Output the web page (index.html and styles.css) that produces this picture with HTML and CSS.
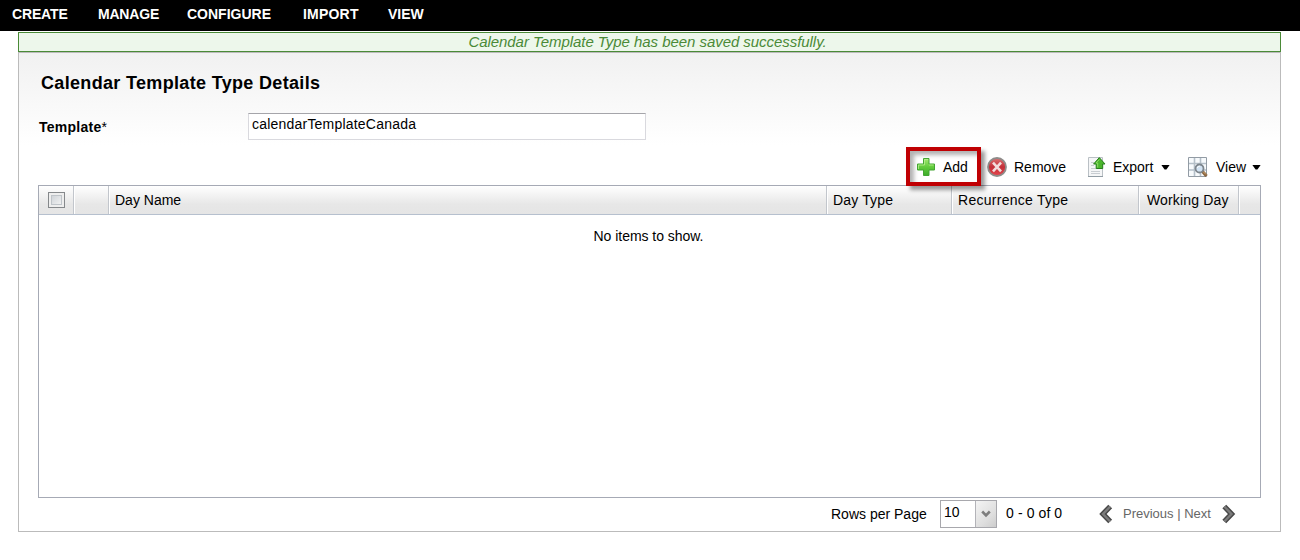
FILE: index.html
```html
<!DOCTYPE html>
<html lang="en">
<head>
<meta charset="utf-8">
<title>Calendar Template Type Details</title>
<link rel="stylesheet" href="styles.css">
</head>
<body>
<nav class="menu"><a class="create">CREATE</a><a class="manage">MANAGE</a><a class="configure">CONFIGURE</a><a class="import">IMPORT</a><a class="view">VIEW</a></nav>
<main class="page">
  <div class="message"><span>Calendar Template Type has been saved successfully.</span></div>
  <section class="panel">
    <h1 class="title">Calendar Template Type Details</h1>
    <div class="field">
      <label class="label">Template<span class="star">*</span></label>
      <div class="input">calendarTemplateCanada</div>
    </div>
    <div class="toolbar">
      <div class="tool add">
        <svg class="plus" width="20" height="20" viewBox="0 0 20 20"><defs><linearGradient id="green" x2="0" y2="1"><stop offset="0" stop-color="#a5e873"/><stop offset=".5" stop-color="#62cc3c"/><stop offset="1" stop-color="#3cab2a"/></linearGradient></defs><path d="M7.500 1.500h5.500v5.500h5.500v6h-5.500v5.500h-5.500v-5.500h-6v-6h6z" fill="url(#green)" stroke="#43a532"/><path d="M8.500 8v-5.500h3.500M2.500 12v-4h6M13 8h4.500" fill="none" stroke="#baf092" opacity=".75"/></svg>
        <span class="t-add">Add</span>
      </div>
      <div class="tool remove">
        <svg width="20" height="20" viewBox="0 0 20 20"><defs><linearGradient id="red" x2="0" y2="1"><stop offset="0" stop-color="#dc7474"/><stop offset=".5" stop-color="#c32f38"/><stop offset="1" stop-color="#e5484f"/></linearGradient></defs><circle cx="10" cy="10" r="9" fill="url(#red)" stroke="#8e8c8a" stroke-width="1.800"/><path d="M6 5.700l8 8.600M14 5.700l-8 8.600" stroke="#f3dddd" stroke-width="2.600"/></svg>
        <span class="t-remove">Remove</span>
      </div>
      <div class="tool export">
        <svg width="20" height="20" viewBox="0 0 20 20"><path d="M1.500 .5h14v19h-14z" fill="#f5f6f7" stroke="#bac0c5"/><path d="M1 19.500h15" stroke="#929da5"/><path d="M4 5.500h3M4 8.500h3M4 11.500h5M4 14.500h9M4 16.500h9" stroke="#c8cdd2"/><path d="M12.300 .6l5.700 6.400h-2.300v4.500H9.200V7H6.600z" fill="#4bb52d" stroke="#287e1e"/><path d="M12.300 2.500L9 6h1.700v4.500" fill="none" stroke="#8cdd65"/></svg>
        <span class="t-export">Export</span><i class="caret"></i>
      </div>
      <div class="tool viewtool">
        <svg width="21" height="20" viewBox="0 0 21 20"><path d="M1.500 .5h18v19h-18z" fill="#f7fafc" stroke="#929ba4"/><path d="M2 6.500h17M2 13h17M7.500 1v18M13.500 1v18" stroke="#b5c0c9" stroke-width="1.600"/><path d="M15.500 14.500l4 4.500" stroke="#8b6742" stroke-width="3.200"/><path d="M16 14.500l3 3" stroke="#d3a66f"/><circle cx="12.500" cy="11.500" r="4" fill="#d2e3f3" stroke="#7e868d" stroke-width="1.800"/><path d="M10.300 11c.4-1.300 1.300-2 2.500-1.800" fill="none" stroke="#fff"/></svg>
        <span class="t-view">View</span><i class="caret"></i>
      </div>
    </div>
    <div class="table">
      <div class="head">
        <div class="cell check"><span class="box"></span></div><div class="cell"></div><div class="cell"><span class="h-name">Day Name</span></div><div class="cell"><span class="h-type">Day Type</span></div><div class="cell"><span class="h-rec">Recurrence Type</span></div><div class="cell work"><span class="h-work">Working Day</span></div><div class="cell last"></div>
      </div>
      <div class="empty"><span>No items to show.</span></div>
    </div>
    <div class="pager">
      <span class="rows">Rows per Page</span>
      <div class="select"><span class="value">10</span><span class="drop"><svg width="10" height="8" viewBox="0 0 10 8"><path d="M1.200 1.500L5 5.300l3.800-3.800" fill="none" stroke="#7d7d7d" stroke-width="2.600"/></svg></span></div>
      <span class="count">0 - 0 of 0</span>
      <svg class="prev" width="14" height="20" viewBox="0 0 14 20"><path d="M11.200 2.500L4 10l7.200 7.500" fill="none" stroke="#484848" stroke-width="5.400"/><path d="M11.200 2.500L4 10l7.200 7.500" fill="none" stroke="#7c7c7c" stroke-width="2.400"/></svg>
      <span class="links">Previous | Next</span>
      <svg class="next" width="14" height="20" viewBox="0 0 14 20"><path d="M2.300 2.500L9.500 10l-7.200 7.500" fill="none" stroke="#484848" stroke-width="5.400"/><path d="M2.300 2.500L9.500 10l-7.200 7.500" fill="none" stroke="#7c7c7c" stroke-width="2.400"/></svg>
    </div>
  </section>
</main>
</body>
</html>
```
FILE: styles.css
```css
* { box-sizing: border-box; }
body { margin: 0; background: #fff; color: #000; font: 14px/16px "Liberation Sans", Arial, sans-serif; white-space: nowrap; }
svg { display: block; flex: none; }
.menu { display: grid; grid-template-columns: 86px 89px 116px 85px 100px; height: 31px; padding: 6px 0 0 12px; background: #000; color: #fff; font-weight: bold; }
.create { letter-spacing: -.15px; }
.manage { letter-spacing: -.2px; }
.import { letter-spacing: .2px; }
.page { width: 1263px; margin: 1px 0 0 18px; }
.message { height: 20px; border: 1px solid #4a8a37; padding-right: 4px; background: #edf7eb; color: #4a8a37; font-size: 15px; font-style: italic; line-height: 18px; letter-spacing: -.05px; text-align: center; }
.panel { height: 480px; border: 1px solid #bbb; padding: 19px 19px 0; background: linear-gradient(#f1f1f1, #fff 92px); }
.title { margin: 0 0 0 3px; font-size: 18px; line-height: 22px; letter-spacing: .33px; }
.field { display: flex; margin: 19px 0 0 1px; }
.label { width: 209px; padding-top: 6px; font-weight: bold; letter-spacing: .25px; }
.star { font-weight: normal; }
.input { width: 398px; height: 27px; border: 1px solid #d9d9de; border-top-color: #a5a5aa; padding: 2px 3px; background: #fff; letter-spacing: .21px; }
.toolbar { display: flex; height: 38px; margin-top: 7px; justify-content: flex-end; align-items: flex-start; }
.tool { display: flex; align-items: center; height: 20px; margin-top: 10px; }
.add { position: relative; z-index: 1; width: 75px; height: 39px; margin-top: 0; border: 4px solid #c00003; padding-left: 6px; gap: 7px; box-shadow: 4px 4px 4px rgba(0, 0, 0, .4), inset 4px 4px 4px rgba(0, 0, 0, .3); }
.remove { width: 95px; margin-left: 6px; gap: 7px; }
.export { width: 95px; margin-left: 5px; }
.t-export { width: 48px; margin-left: 6px; }
.viewtool { width: 74px; margin-left: 5px; }
.t-view { width: 36px; margin-left: 8px; }
.t-view, .t-export { letter-spacing: -.03px; }
.caret { width: 9px; height: 5px; flex: none; background: #000; clip-path: polygon(0 0, 100% 0, 60% 100%, 40% 100%); }
.table { height: 313px; width: 1223px; border: 1px solid #a6aab5; background: #fff; }
.head { display: grid; grid-template-columns: 35px 35px 718px 125px 187px 100px 21px; height: 29px; border-bottom: 1px solid #b6c0ce; background: linear-gradient(#fff, #e7e7e7 65%, #e5e5e5); }
.cell { border-right: 1px solid #c2c6cc; padding: 6px 0 0 6px; box-shadow: 1px 0 #fff; }
.check { padding: 6px 0 0 9px; }
.work { padding-left: 8px; }
.last { border-right: 0; box-shadow: none; }
.h-type, .h-work { letter-spacing: .15px; }
.h-rec { letter-spacing: .27px; }
.box { display: block; width: 17px; height: 16px; border: 1px solid #85888b; background: linear-gradient(135deg, #c6cbd0, #fafafa); box-shadow: inset 0 0 0 2px #eee, inset 0 0 0 3px #bfc4c9; }
.empty { padding: 13px 2px 0 0; text-align: center; }
.empty span { letter-spacing: -.03px; }
.pager { display: flex; align-items: flex-start; margin-top: 2px; padding-left: 793px; }
.rows { width: 109px; padding-top: 6px; }
.select { display: flex; width: 57px; height: 28px; border: 1px solid #a8a8ad; background: #fff; }
.value { width: 34px; padding: 3px 0 0 3px; }
.drop { display: grid; place-items: center; width: 21px; border-left: 1px solid #b3b3b8; background: linear-gradient(135deg, #f4f4f4, #dedede 65%, #ccc); }
.count { width: 93px; margin-left: 9px; padding-top: 5px; letter-spacing: .1px; }
.prev, .next { margin-top: 4px; }
.links { width: 89px; margin: 6px 10px 0; color: #666; font-size: 13px; }
```
